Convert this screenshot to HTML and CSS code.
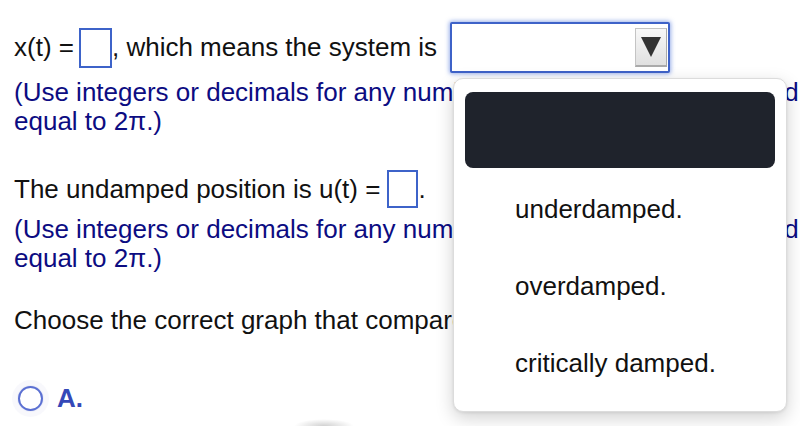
FILE: index.html
```html
<!DOCTYPE html>
<html>
<head>
<meta charset="utf-8">
<link rel="stylesheet" href="styles.css">
</head>
<body>
<div class="page">
  <div class="row row1">
    <span>x(t)&nbsp;=</span><span class="ansbox"></span><span>, which means the system is</span>
    <span class="select"><span class="select-btn"><svg width="20" height="20" viewBox="0 0 20 20"><polygon points="0,0 20,0 10,20" fill="#333"/></svg></span></span>
  </div>
  <div class="hint hint1">
    <div class="nowrap">(Use integers or decimals for any numbers in the expression. Round to the nearest hundredth as needed. Use angles greater than or</div>
    <div>equal to 2π.)</div>
  </div>
  <div class="row row2">
    <span>The undamped position is u(t)&nbsp;=</span><span class="ansbox ansbox2"></span><span>.</span>
  </div>
  <div class="hint hint2">
    <div class="nowrap">(Use integers or decimals for any numbers in the expression. Round to the nearest hundredth as needed. Use angles greater than or</div>
    <div>equal to 2π.)</div>
  </div>
  <div class="choose">Choose the correct graph that compares the motions.</div>
  <div class="option">
    <span class="radio"></span><span class="opt-label">A.</span>
  </div>
  <div class="graph-shadow"></div>

  <div class="menu">
    <div class="menu-item menu-selected"></div>
    <div class="menu-item">underdamped.</div>
    <div class="menu-item">overdamped.</div>
    <div class="menu-item">critically damped.</div>
  </div>
</div>
</body>
</html>
```

FILE: styles.css
```css
html, body {
  margin: 0;
  padding: 0;
  overflow: hidden;
  background: #fff;
}
body {
  width: 800px;
  height: 426px;
  font-family: "Liberation Sans", Arial, sans-serif;
  font-size: 26px;
  line-height: 29px;
  color: #111;
}
.page {
  position: relative;
  width: 800px;
  height: 426px;
  padding: 22px 0 0 14px;
  box-sizing: border-box;
}
.row {
  display: flex;
  align-items: center;
  white-space: nowrap;
}
.row1 {
  height: 51px;
}
.ansbox {
  display: inline-block;
  width: 33px;
  height: 40px;
  box-sizing: border-box;
  border: 2px solid #3d63c9;
  background: #fff;
  margin-left: 5px;
}
.ansbox2 {
  width: 31px;
  height: 38px;
  margin-left: 7px;
}
.select {
  position: relative;
  display: inline-block;
  width: 220px;
  height: 51px;
  box-sizing: border-box;
  border: 2px solid #3e62c8;
  border-radius: 2px;
  background: #fff;
  box-shadow: 0 0 4px 1px rgba(70, 110, 215, 0.55);
  margin-left: 13px;
}
.select-btn {
  position: absolute;
  right: 1px;
  top: 4px;
  width: 32px;
  height: 39px;
  box-sizing: border-box;
  border: 1px solid #c4c4c4;
  border-right-color: #aaa;
  border-bottom: 2px solid #aaa;
  background: linear-gradient(#f8f8f8, #e0e0e0);
  display: flex;
  align-items: center;
  justify-content: center;
}
.select-btn svg {
  display: block;
}
.hint {
  color: #0c0c82;
}
.nowrap {
  white-space: nowrap;
}
.hint1 {
  margin-top: 5px;
}
.row2 {
  height: 38px;
  margin-top: 34px;
}
.hint2 {
  margin-top: 7px;
}
.choose {
  margin-top: 33px;
  white-space: nowrap;
}
.option {
  display: flex;
  align-items: center;
  height: 29px;
  margin-top: 49px;
}
.radio {
  display: inline-block;
  width: 25px;
  height: 25px;
  box-sizing: border-box;
  border: 2.5px solid #5b70d2;
  border-radius: 50%;
  margin-left: 4px;
  box-shadow: 0 0 1px rgba(91, 112, 210, 0.6), 0 0 0 6px rgba(244, 244, 250, 0.6);
}
.opt-label {
  font-weight: bold;
  color: #3448b8;
  margin-left: 14px;
}
.graph-shadow {
  margin: 6px 0 0 280px;
  width: 60px;
  height: 14px;
  border-radius: 50%;
  background: radial-gradient(ellipse at center, rgba(0,0,0,0.18), rgba(0,0,0,0) 70%);
}
.menu {
  position: absolute;
  left: 453px;
  top: 78px;
  width: 334px;
  height: 334px;
  box-sizing: border-box;
  padding: 13px 11px 13px 11px;
  background: #fff;
  border: 1px solid #dcdcdc;
  border-radius: 10px;
  box-shadow: 0 6px 18px rgba(0, 0, 0, 0.18), 0 1px 3px rgba(0, 0, 0, 0.08);
  color: #111;
}
.menu-item {
  height: 77px;
  box-sizing: border-box;
  padding: 4px 0 0 50px;
  line-height: 74px;
  white-space: nowrap;
}
.menu-selected {
  height: 76px;
  background: #1f232c;
  border-radius: 8px;
}
```
